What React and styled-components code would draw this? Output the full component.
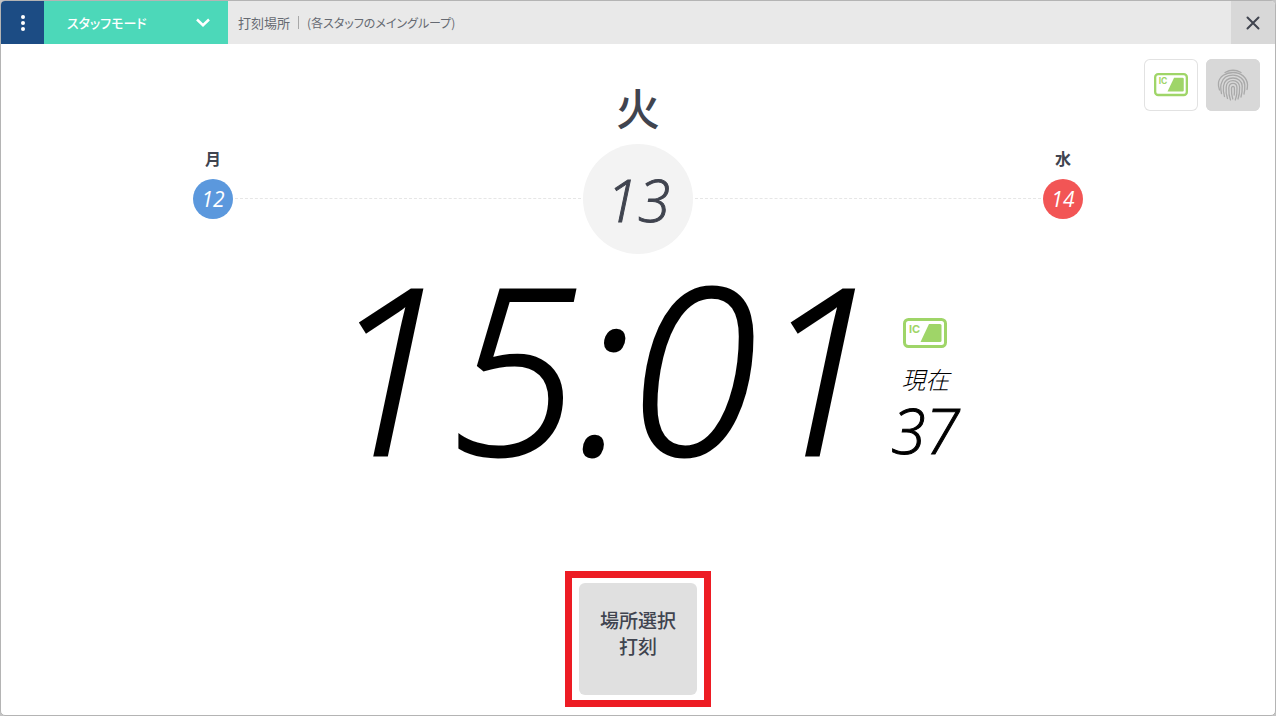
import React from 'react';
import styled, { createGlobalStyle } from 'styled-components';

const GlobalStyle = createGlobalStyle`
  *, *::before, *::after {
    box-sizing: border-box;
  }

  body {
    margin: 0;
    background-color: #c4c4c4;
    color: #40444f;
    font-family: 'Noto Sans CJK JP', sans-serif;
  }

  button, select {
    font: inherit;
    color: inherit;
    border: none;
    padding: 0;
    cursor: pointer;
  }
`;

const Window = styled.div`
  display: flex;
  flex-direction: column;
  min-height: 100vh;
  background-color: white;
  border: 1px solid #b4b4b4;
  border-radius: 5px;
  overflow: hidden;
`;

const Toolbar = styled.header`
  display: flex;
  align-items: stretch;
  height: 43px;
  background-color: #e9e9e9;
`;

const ToolbarButton = styled.button`
  display: flex;
  justify-content: center;
  align-items: center;
  width: ${({ $width }) => $width};
  background-color: ${({ $bg }) => $bg};
`;

const ModePicker = styled.label`
  display: grid;
  grid-template-columns: 1fr 40px;
  align-items: center;
  width: 184px;
  padding-right: 5px;
  background-color: #4cd8b9;
`;

const ModeSelect = styled.select`
  grid-area: 1 / 1 / 2 / 3;
  appearance: none;
  width: 100%;
  height: 43px;
  padding-left: 23px;
  background-color: transparent;
  color: white;
  font-size: 13px;
  font-weight: 500;
  font-feature-settings: 'palt';
`;

const Chevron = styled.svg`
  grid-area: 1 / 2;
  justify-self: center;
  pointer-events: none;
`;

const Place = styled.p`
  flex: 1;
  display: flex;
  align-items: center;
  gap: 8px;
  margin: 0;
  padding-left: 10px;
  color: #666a72;
  font-size: 13px;
`;

const Group = styled.span`
  font-size: 12px;
  font-feature-settings: 'palt';
`;

const Divider = styled.span`
  width: 1px;
  height: 13px;
  background-color: #a8a8a8;
`;

const Top = styled.div`
  display: grid;
  grid-template-columns: 3fr 14fr 3fr;
`;

const Calendar = styled.section`
  grid-column: 2;
  display: flex;
  align-items: flex-end;
  padding: 29px 1px 0;
`;

const Day = styled.div`
  display: flex;
  flex-direction: column;
  align-items: center;
  padding-bottom: ${({ $today }) => ($today ? '0' : '35px')};
`;

const DayName = styled.span`
  padding-bottom: ${({ $today }) => ($today ? '3px' : '1px')};
  font-size: ${({ $today }) => ($today ? '44px' : '16px')};
  line-height: ${({ $today }) => ($today ? '68px' : '40px')};
  font-weight: ${({ $today }) => ($today ? '500' : '700')};
`;

const DayNumber = styled.span`
  display: flex;
  justify-content: center;
  align-items: center;
  width: ${({ $size }) => $size};
  height: ${({ $size }) => $size};
  border-radius: 50%;
  background-color: ${({ $bg }) => $bg};
  color: ${({ $color }) => $color};
  font-family: 'Open Sans', sans-serif;
  font-size: ${({ $font }) => $font};
  font-style: italic;
  font-weight: ${({ $weight }) => $weight};
  -webkit-text-stroke: ${({ $stroke }) => $stroke};
`;

const DayLine = styled.div`
  flex: 1;
  margin: 0 2px 55px;
  border-top: 1px dashed #e6e6e6;
`;

const Readers = styled.div`
  grid-column: 3;
  justify-self: end;
  display: flex;
  align-items: flex-start;
  gap: 8px;
  padding: 15px 15px 0 0;
`;

const ReaderButton = styled.button`
  display: flex;
  justify-content: center;
  align-items: center;
  width: 54px;
  height: 52px;
  border-radius: 6px;
  background-color: ${({ $off }) => ($off ? '#d8d8d8' : 'white')};
  box-shadow: inset 0 0 0 1px ${({ $off }) => ($off ? '#d8d8d8' : '#e2e2e2')};
`;

const ClockRow = styled.main`
  display: flex;
  justify-content: center;
  gap: 8px;
  padding: 12px 0 0 8px;
  color: black;
`;

const Clock = styled.time`
  font-family: 'Open Sans', sans-serif;
  font-size: 230px;
  line-height: 200px;
  font-style: italic;
  font-weight: 300;
  -webkit-text-stroke: 3px black;
`;

const Side = styled.div`
  display: flex;
  flex-direction: column;
  align-items: center;
  padding-top: 52px;
`;

const Now = styled.span`
  padding-top: 13px;
  font-size: 24px;
  line-height: 36px;
  font-style: italic;
  font-weight: 300;
`;

const Seconds = styled.span`
  font-family: 'Open Sans', sans-serif;
  font-size: 62px;
  line-height: 66px;
  font-style: italic;
  font-weight: 300;
  -webkit-text-stroke: 1px black;
`;

const Footer = styled.footer`
  display: flex;
  justify-content: center;
  margin-top: auto;
  padding-bottom: 8px;
`;

const Highlight = styled.div`
  padding: 5px 7px;
  border: 7px solid #ed1c24;
`;

const PunchButton = styled.button`
  width: 118px;
  height: 112px;
  padding-bottom: 12px;
  border-radius: 6px;
  background-color: #e0e0e0;
  font-size: 19px;
  line-height: 26px;
  font-weight: 500;
`;

const IcText = styled.text`
  font-family: Inter, sans-serif;
  font-size: 11px;
  font-weight: 700;
`;

const IcCard = ({ width }) => (
  <svg width={width} viewBox="0 0 44 30" fill="#9fd568" aria-hidden="true">
    <rect x="1.5" y="1.5" width="41" height="27" rx="4" fill="white" stroke="#9fd568" strokeWidth="3" />
    <IcText x="6" y="14.5">IC</IcText>
    <path d="M26 6H37Q38.500 6 38.500 7.500V22.500Q38.500 24 37 24H17.500Z" />
  </svg>
);

const Fingerprint = () => (
  <svg width="32" height="32" viewBox="0 0 32 32" fill="none" stroke="#a9a9a9" strokeWidth="1.300" strokeLinecap="round" aria-hidden="true">
    <path d="M8 3.500Q16-1 24 3.500" />
    <path d="M2.500 21Q1 17 1.500 13.500C2.500 7.500 8.500 3.500 16 3.500C24 3.500 30 8.500 30.500 15.500Q30.500 19 30 20.500" />
    <path d="M4.500 24.500Q3 17 4.500 14C6 9 10.500 6.200 16 6.200C22.500 6.200 27.500 10.500 27.800 16Q28 21 27 25" />
    <path d="M7.500 27.500Q5.800 22 6.500 17C7 12 11 9 16 9C21 9 25 12.500 25.200 17Q25.400 23 24 28" />
    <path d="M10.500 29.500Q8.500 24 9.200 18C9.500 14 12.500 11.700 16 11.700C19.800 11.700 22.500 14.500 22.600 18Q22.800 25 21 30" />
    <path d="M13.500 31Q11.500 26 11.800 19C12 16 13.500 14.400 16 14.400C18.500 14.400 20 16.500 20 19Q20.300 26 18.300 31" />
    <path d="M15.800 30Q14.200 25 14.500 19.500Q14.600 17.300 16 17.300T17.400 19.500Q17.600 23 17.200 26" />
  </svg>
);

const SideDay = ({ name, number, color }) => (
  <Day>
    <DayName>{name}</DayName>
    <DayNumber $size="40px" $font="21px" $weight="400" $bg={color} $color="white">{number}</DayNumber>
  </Day>
);

const App = () => (
  <>
    <GlobalStyle />
    <Window>
      <Toolbar>
        <ToolbarButton $width="43px" $bg="#1c4c84" aria-label="メニュー">
          <svg width="6" height="18" viewBox="0 0 6 18" fill="white">
            <circle cx="3" cy="3" r="2" />
            <circle cx="3" cy="9" r="2" />
            <circle cx="3" cy="15" r="2" />
          </svg>
        </ToolbarButton>
        <ModePicker>
          <ModeSelect aria-label="モード">
            <option>スタッフモード</option>
          </ModeSelect>
          <Chevron width="14" height="9" viewBox="0 0 14 9" fill="none" stroke="white" strokeWidth="2.500">
            <path d="M1 1.500L7 7.200L13 1.500" />
          </Chevron>
        </ModePicker>
        <Place>
          打刻場所
          <Divider />
          <Group>(各スタッフのメイングループ)</Group>
        </Place>
        <ToolbarButton $width="44px" $bg="#d8d8d8" aria-label="閉じる">
          <svg width="14" height="14" viewBox="0 0 14 14" stroke="#40444f" strokeWidth="2" strokeLinecap="round">
            <path d="M1.500 1.500L12.500 12.500M12.500 1.500L1.500 12.500" />
          </svg>
        </ToolbarButton>
      </Toolbar>

      <Top>
        <Calendar>
          <SideDay name="月" number="12" color="#5b98dd" />
          <DayLine />
          <Day $today>
            <DayName $today>火</DayName>
            <DayNumber $size="110px" $font="58px" $weight="300" $stroke="1px #40444f" $bg="#f3f3f3" $color="#40444f">
              13
            </DayNumber>
          </Day>
          <DayLine />
          <SideDay name="水" number="14" color="#f25555" />
        </Calendar>
        <Readers>
          <ReaderButton aria-label="ICカード">
            <IcCard width="34" />
          </ReaderButton>
          <ReaderButton $off aria-label="指紋">
            <Fingerprint />
          </ReaderButton>
        </Readers>
      </Top>

      <ClockRow>
        <Clock>15:01</Clock>
        <Side>
          <IcCard width="44" />
          <Now>現在</Now>
          <Seconds>37</Seconds>
        </Side>
      </ClockRow>

      <Footer>
        <Highlight>
          <PunchButton>
            場所選択
            <br />
            打刻
          </PunchButton>
        </Highlight>
      </Footer>
    </Window>
  </>
);

export default App;
